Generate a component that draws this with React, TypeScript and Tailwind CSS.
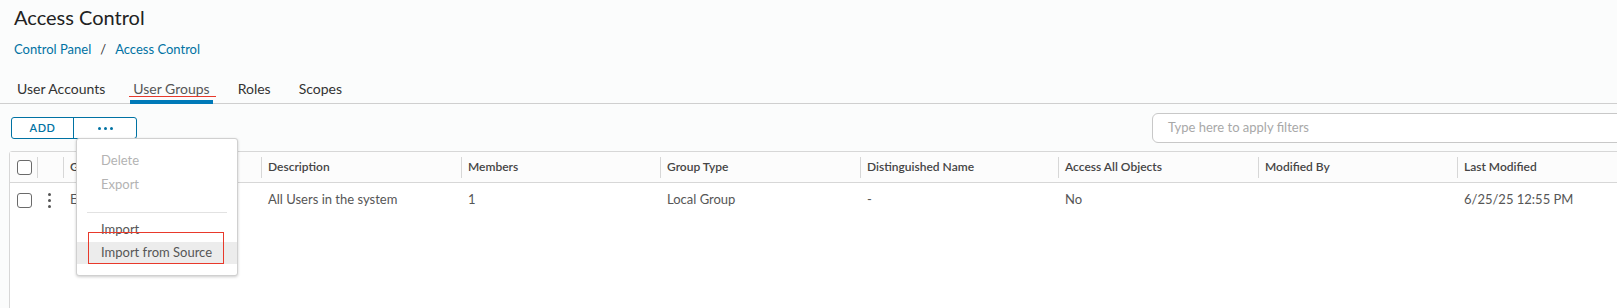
import React from 'react';

const font = { fontFamily: 'Lato, "Noto Sans", sans-serif' };

const columns = [
  { key: 'name', label: 'Group Name' },
  { key: 'desc', label: 'Description' },
  { key: 'members', label: 'Members' },
  { key: 'type', label: 'Group Type' },
  { key: 'dn', label: 'Distinguished Name' },
  { key: 'access', label: 'Access All Objects' },
  { key: 'by', label: 'Modified By' },
  { key: 'last', label: 'Last Modified' },
];

const row: Record<string, string> = {
  name: 'Everyone',
  desc: 'All Users in the system',
  members: '1',
  type: 'Local Group',
  dn: '-',
  access: 'No',
  by: '',
  last: '6/25/25 12:55 PM',
};

const gridCols = 'grid grid-cols-[27px_26px_198px_200px_199px_200px_198px_200px_199px_1fr]';

const Checkbox = () => (
  <span className="block w-[15px] h-[15px] rounded-[3px] border border-[#6a6a6a] bg-white" />
);

const Tab = ({ label, active }: { label: string; active?: boolean }) => (
  <div className="relative h-full flex items-center px-[3px]">
    <span className={active ? 'text-[14px] text-[#565656]' : 'text-[14px] text-[#333]'}>{label}</span>
    {active && <span className="absolute left-0 right-0 bottom-[-1px] h-[4px] bg-[#0079b8]" />}
  </div>
);

export default function App() {
  return (
    <div style={font} className="relative w-[1617px] h-[308px] overflow-hidden bg-[#fbfcfc]">
      <h1 className="pl-[14px] pt-[4px] text-[20px] leading-[26px] text-[#222]">Access Control</h1>

      <div className="pl-[14px] mt-[10px] flex items-center gap-[9px] text-[13px] leading-[18px]">
        <span className="text-[#0072a3]">Control Panel</span>
        <span className="text-[#333]">/</span>
        <span className="text-[#0072a3]">Access Control</span>
      </div>

      <div className="mt-[15px] h-[31px] flex items-stretch gap-[22px] pl-[14px] border-b border-[#cfcfcf]">
        <Tab label="User Accounts" />
        <Tab label="User Groups" active />
        <Tab label="Roles" />
        <Tab label="Scopes" />
      </div>

      <div className="flex items-center justify-between pl-[11px] mt-[9px] h-[30px]">
        <div className="flex h-[22px] border border-[#0072a3] rounded-[3px] bg-white">
          <button className="w-[62px] text-[11px] font-semibold tracking-[0.5px] text-[#0072a3] border-r border-[#0072a3]">
            ADD
          </button>
          <button className="w-[62px] flex items-center justify-center gap-[3px]">
            <span className="w-[3px] h-[3px] rounded-full bg-[#0072a3]" />
            <span className="w-[3px] h-[3px] rounded-full bg-[#0072a3]" />
            <span className="w-[3px] h-[3px] rounded-full bg-[#0072a3]" />
          </button>
        </div>
        <div className="w-[480px] h-[30px] mr-[-15px] rounded-[6px] border border-[#c8c8c8] bg-white flex items-center pl-[15px] text-[13px] text-[#a8a8a8]">
          Type here to apply filters
        </div>
      </div>

      <div className="ml-[9px] mt-[8px] w-[1630px] h-[200px] border border-[#d7d7d7] rounded-[3px] bg-white">
        <div className={`${gridCols} h-[31px] border-b border-[#d7d7d7] bg-[#fcfcfc] items-center`}>
          <div className="flex justify-center pl-[1px]"><Checkbox /></div>
          <div className="h-[21px] border-l border-[#d7d7d7]" />
          {columns.map((c) => (
            <div key={c.key} className="h-[21px] border-l border-[#d7d7d7] pl-[6px] flex items-center text-[12px] font-semibold text-[#454545]">
              {c.label}
            </div>
          ))}
        </div>
        <div className={`${gridCols} h-[34px] items-center`}>
          <div className="flex justify-center pl-[1px]"><Checkbox /></div>
          <div className="flex flex-col items-center gap-[3px] pr-[1px]">
            <span className="w-[3px] h-[3px] rounded-full bg-[#555]" />
            <span className="w-[3px] h-[3px] rounded-full bg-[#555]" />
            <span className="w-[3px] h-[3px] rounded-full bg-[#555]" />
          </div>
          {columns.map((c) => (
            <div key={c.key} className="pl-[7px] text-[13px] text-[#565656]">
              {row[c.key]}
            </div>
          ))}
        </div>
      </div>

      {/* annotation underline on active tab */}
      <div className="absolute left-[129px] top-[96px] w-[87px] h-[1px] bg-[#e8392b]" />

      {/* actions dropdown */}
      <div className="absolute left-[76px] top-[138px] w-[162px] bg-white border border-[#d0d0d0] rounded-[3px] shadow-[0_1px_3px_rgba(0,0,0,0.2)] pt-[10px] pb-[11px] text-[13px]">
        <div className="h-[24px] pl-[24px] flex items-center text-[#b3b3b3]">Delete</div>
        <div className="h-[24px] pl-[24px] flex items-center text-[#b3b3b3]">Export</div>
        <div className="mx-[10px] mt-[15px] mb-[7px] h-[1px] bg-[#e2e2e2]" />
        <div className="h-[20px] pl-[24px] flex items-center text-[#565656]">Import</div>
        <div className="mt-[2px] h-[22px] pl-[24px] flex items-center text-[#565656] bg-[#ececec]">Import from Source</div>
      </div>

      {/* annotation box */}
      <div className="absolute left-[88px] top-[232px] w-[136px] h-[32px] border border-[#e8392b]" />
    </div>
  );
}
